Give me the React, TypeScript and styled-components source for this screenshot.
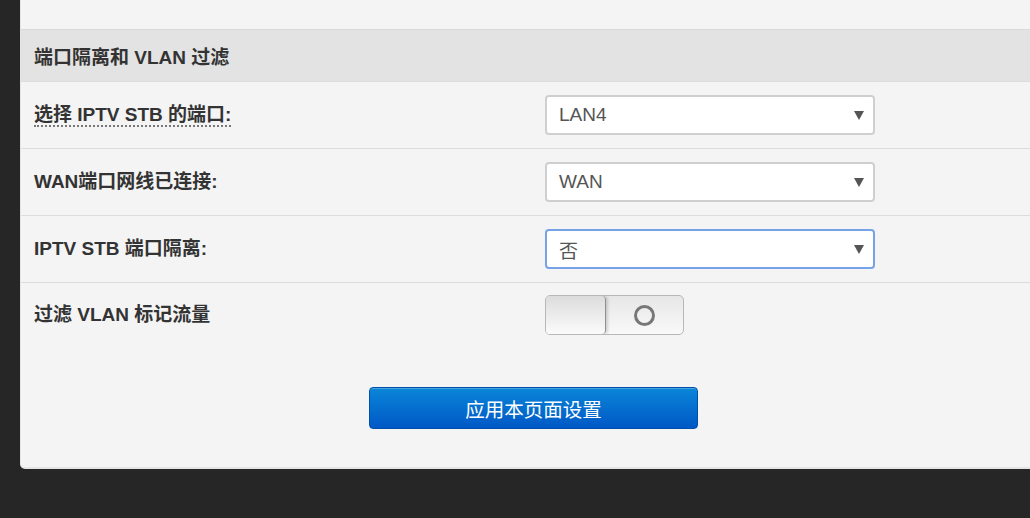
import React from 'react';
import styled, { createGlobalStyle, css } from 'styled-components';

const GlobalStyle = createGlobalStyle`
  html, body {
    margin: 0;
    padding: 0;
    background: #262626;
    overflow: hidden;
  }
  body {
    font-family: "Liberation Sans", Arial, "Noto Sans CJK SC", sans-serif;
  }
`;

const Page = styled.div`
  height: 518px;
  padding-left: 20px;
`;

const Panel = styled.div`
  width: 1026px;
  background: #f4f4f4;
  border-left: 1px solid #e4e4e4;
  border-bottom: 2px solid #e4e4e4;
  border-radius: 0 0 0 5px;
  padding-top: 29px;
  padding-bottom: 38px;
  box-sizing: border-box;
`;

const SectionHead = styled.div`
  height: 53px;
  display: flex;
  align-items: center;
  padding-left: 13px;
  background: #e3e3e3;
  border-top: 1px solid #d9d9d9;
  border-bottom: 1px solid #dcdcdc;
  color: #333;
  font-size: 19px;
  font-weight: 700;
  box-sizing: border-box;
`;

const Row = styled.div<{ $last?: boolean }>`
  height: 67px;
  display: grid;
  grid-template-columns: 511px 330px;
  align-items: center;
  padding-left: 13px;
  border-bottom: 1px solid #dcdcdc;
  box-sizing: border-box;

  ${({ $last }) =>
    $last &&
    css`
      border-bottom: none;
      padding-top: 12px;
      align-items: start;
    `}
`;

const Label = styled.span<{ $hint?: boolean; $tall?: boolean }>`
  justify-self: start;
  color: #333;
  font-size: 19px;
  font-weight: 700;
  line-height: 22px;

  ${({ $hint }) =>
    $hint &&
    css`
      border-bottom: 2px dotted #777;
      line-height: 21px;
    `}

  ${({ $tall }) =>
    $tall &&
    css`
      line-height: 40px;
    `}
`;

const Select = styled.div<{ $focused?: boolean }>`
  height: 40px;
  display: flex;
  align-items: center;
  justify-content: space-between;
  padding: 0 9px 0 12px;
  background: #fff;
  border: 2px solid #cfcfcf;
  border-radius: 4px;
  color: #555;
  font-size: 19px;
  box-sizing: border-box;

  ${({ $focused }) =>
    $focused &&
    css`
      border-color: #76a3e8;
    `}
`;

const Arrow = styled.span`
  width: 0;
  height: 0;
  border-left: 5px solid transparent;
  border-right: 5px solid transparent;
  border-top: 9px solid #555;
  margin-top: 1px;
`;

const Toggle = styled.div`
  width: 139px;
  height: 40px;
  display: flex;
  border: 1px solid #b8b8b8;
  border-radius: 5px;
  overflow: hidden;
  background: linear-gradient(#e6e6e6, #f9f9f9);
  box-sizing: border-box;
`;

const Knob = styled.div`
  width: 59px;
  height: 100%;
  background: linear-gradient(#dcdcdc, #fbfbfb);
  border-right: 1px solid #8f8f8f;
  border-radius: 0 4px 4px 0;
  box-shadow: 2px 0 3px rgba(0, 0, 0, 0.15);
`;

const OffSide = styled.div`
  flex: 1;
  display: flex;
  align-items: center;
  justify-content: center;
`;

const Ring = styled.span`
  width: 15px;
  height: 15px;
  border: 3px solid #777;
  border-radius: 50%;
`;

const Actions = styled.div`
  display: flex;
  justify-content: center;
  padding-top: 37px;
`;

const ApplyButton = styled.button`
  width: 329px;
  height: 42px;
  border: 1px solid #0050a8;
  border-radius: 4px;
  background: linear-gradient(#0a86d8, #0058c6);
  box-shadow: inset 0 1px 0 rgba(255, 255, 255, 0.25);
  color: #fff;
  font-family: "Noto Sans CJK SC", sans-serif;
  font-size: 19.5px;
  padding: 0;
`;

interface SelectRowProps {
  label: string;
  value: string;
  hint?: boolean;
  focused?: boolean;
}

const SelectRow: React.FC<SelectRowProps> = ({ label, value, hint, focused }) => (
  <Row>
    <Label $hint={hint}>{label}</Label>
    <Select $focused={focused}>
      <span>{value}</span>
      <Arrow />
    </Select>
  </Row>
);

const App: React.FC = () => {
  return (
    <Page>
      <GlobalStyle />
      <Panel>
        <SectionHead>端口隔离和 VLAN 过滤</SectionHead>
        <SelectRow label="选择 IPTV STB 的端口:" value="LAN4" hint />
        <SelectRow label="WAN端口网线已连接:" value="WAN" />
        <SelectRow label="IPTV STB 端口隔离:" value="否" focused />
        <Row $last>
          <Label $tall>过滤 VLAN 标记流量</Label>
          <Toggle>
            <Knob />
            <OffSide>
              <Ring />
            </OffSide>
          </Toggle>
        </Row>
        <Actions>
          <ApplyButton>应用本页面设置</ApplyButton>
        </Actions>
      </Panel>
    </Page>
  );
};

export default App;
